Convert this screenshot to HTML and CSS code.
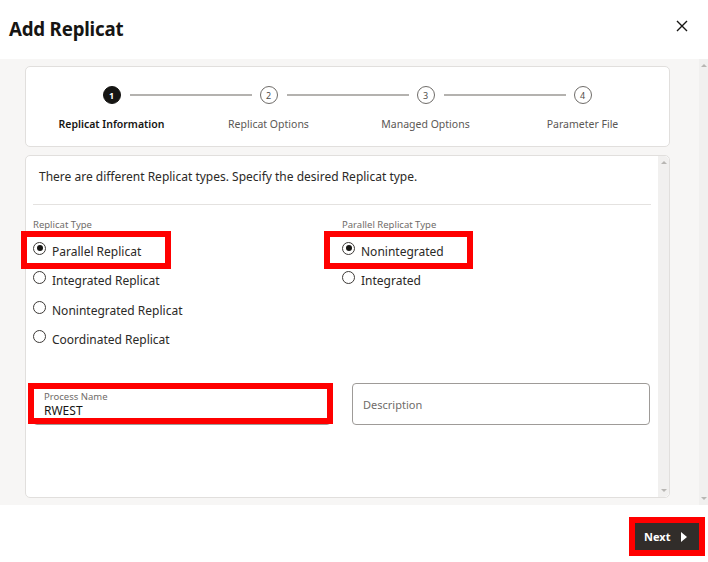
FILE: index.html
```html
<!DOCTYPE html>
<html lang="en">
<head>
<meta charset="utf-8">
<title>Add Replicat</title>
<link rel="stylesheet" href="styles.css">
</head>
<body>
<div class="dialog">
  <header class="dlg-head">
    <h1 class="title">Add Replicat</h1>
    <button class="close" aria-label="Close">
      <svg width="12" height="12" viewBox="0 0 12 12"><path d="M1 1 L11 11 M11 1 L1 11" stroke="#161513" stroke-width="1.4" fill="none"/></svg>
    </button>
  </header>
  <div class="dlg-body">
    <div class="body-main">
      <section class="card stepper">
        <ol class="steps">
          <li class="step active"><span class="dot">1</span><span class="step-label">Replicat Information</span></li>
          <li class="step"><span class="dot">2</span><span class="step-label">Replicat Options</span></li>
          <li class="step"><span class="dot">3</span><span class="step-label">Managed Options</span></li>
          <li class="step last"><span class="dot">4</span><span class="step-label">Parameter File</span></li>
        </ol>
      </section>
      <section class="card content">
        <div class="content-inner">
          <p class="intro">There are different Replicat types. Specify the desired Replicat type.</p>
          <hr class="divider">
          <div class="radio-cols">
            <div class="radio-group">
              <div class="group-label">Replicat Type</div>
              <label class="radio hl hl-left"><span class="mark checked"></span>Parallel Replicat</label>
              <label class="radio"><span class="mark"></span>Integrated Replicat</label>
              <label class="radio"><span class="mark"></span>Nonintegrated Replicat</label>
              <label class="radio"><span class="mark"></span>Coordinated Replicat</label>
            </div>
            <div class="radio-group">
              <div class="group-label">Parallel Replicat Type</div>
              <label class="radio hl hl-right"><span class="mark checked"></span>Nonintegrated</label>
              <label class="radio"><span class="mark"></span>Integrated</label>
            </div>
          </div>
          <div class="fields">
            <div class="field filled hl hl-field">
              <span class="field-label">Process Name</span>
              <span class="field-value">RWEST</span>
            </div>
            <div class="field">
              <span class="placeholder">Description</span>
            </div>
          </div>
        </div>
        <div class="vscroll inner"><span class="arr up"></span><span class="arr down"></span></div>
      </section>
    </div>
    <div class="vscroll outer"><span class="arr up"></span><span class="arr down"></span></div>
  </div>
  <footer class="dlg-foot">
    <button class="next">Next
      <svg width="6" height="10" viewBox="0 0 6 10"><path d="M0 0 L6 5 L0 10 Z" fill="#ffffff"/></svg>
    </button>
  </footer>
</div>
</body>
</html>
```
FILE: styles.css
```css
*, *::before, *::after { box-sizing: border-box; }
html, body { margin: 0; padding: 0; }
body {
  width: 708px;
  height: 562px;
  overflow: hidden;
  font-family: "Noto Sans", "Open Sans", sans-serif;
  color: #161513;
  background: #ffffff;
}
.dialog {
  display: flex;
  flex-direction: column;
  height: 562px;
}
.dlg-head {
  height: 59px;
  flex: none;
  display: flex;
  align-items: center;
  justify-content: space-between;
  padding: 0 20px 2px 9px;
}
.title {
  margin: 0;
  font-size: 18.7px;
  font-weight: 700;
  letter-spacing: -0.2px;
}
.close {
  border: 0;
  background: none;
  padding: 0;
  width: 12px;
  height: 12px;
  display: flex;
  margin-bottom: 5px;
}
.dlg-body {
  flex: 1;
  display: flex;
  background: #f7f6f5;
  min-height: 0;
}
.body-main {
  flex: 1;
  padding: 7px 29px 7px 25px;
  display: flex;
  flex-direction: column;
  gap: 8px;
}
.card {
  background: #ffffff;
  border: 1px solid #e1dfdd;
  border-radius: 5px;
}
.stepper {
  flex: none;
  height: 81px;
  padding: 19px 8px 0 7px;
}
.steps {
  list-style: none;
  margin: 0;
  padding: 0;
  display: grid;
  grid-template-columns: repeat(4, 1fr);
}
.step {
  position: relative;
  display: flex;
  flex-direction: column;
  align-items: center;
}
.step:not(.last)::after {
  content: "";
  position: absolute;
  top: 8px;
  left: calc(50% + 18px);
  right: calc(-50% + 17px);
  height: 2px;
  background: #b4b2af;
}
.dot {
  width: 18px;
  height: 18px;
  border-radius: 50%;
  border: 1px solid #6f6c69;
  display: flex;
  align-items: center;
  justify-content: center;
  font-size: 9px;
  color: #4f4c49;
  line-height: 1;
}
.step.active .dot {
  background: #161513;
  border-color: #161513;
  color: #ffffff;
  font-weight: 700;
}
.step-label {
  margin-top: 13px;
  font-size: 10.5px;
  line-height: 15px;
  color: #5b5855;
  white-space: nowrap;
}
.step.active .step-label {
  color: #161513;
  font-weight: 600;
}
.content {
  flex: 1;
  display: flex;
  min-height: 0;
}
.content-inner {
  flex: 1;
  padding: 12px 7px 0 7px;
}
.intro {
  margin: 0 0 0 6px;
  font-size: 12px;
  line-height: 18px;
  color: #2b2926;
}
.divider {
  margin: 18px 0 0 0;
  border: 0;
  height: 1px;
  background: #e4e2e0;
}
.radio-cols {
  display: grid;
  grid-template-columns: 309px 1fr;
  margin-top: 13px;
}
.group-label {
  font-size: 9.5px;
  line-height: 14px;
  color: #6f6c69;
  margin-bottom: 3px;
}
.radio {
  position: relative;
  display: flex;
  align-items: center;
  height: 29.5px;
  padding-top: 3px;
  font-size: 12px;
  color: #2b2926;
}
.mark {
  width: 13px;
  height: 13px;
  border-radius: 50%;
  border: 1.2px solid #3d3a37;
  margin-right: 6px;
  margin-top: -6px;
  display: flex;
  align-items: center;
  justify-content: center;
  flex: none;
}
.mark.checked::before {
  content: "";
  width: 6px;
  height: 6px;
  border-radius: 50%;
  background: #161513;
}
.hl::after {
  content: "";
  position: absolute;
  border: 6px solid #ff0000;
  pointer-events: none;
}
.hl-left::after {
  top: -4px;
  bottom: -4.5px;
  left: -12px;
  width: 150px;
}
.hl-right::after {
  top: -4px;
  bottom: -4.5px;
  left: -18px;
  width: 149px;
}
.fields {
  display: grid;
  grid-template-columns: 298px 298px;
  column-gap: 21px;
  margin-top: 30px;
}
.field {
  position: relative;
  height: 42px;
  border: 1px solid #9e9b98;
  border-radius: 4px;
  padding: 0 10px;
  display: flex;
  flex-direction: column;
  justify-content: center;
}
.field-label {
  font-size: 9.5px;
  line-height: 12px;
  color: #6f6c69;
  margin-top: 1px;
}
.field-value {
  font-size: 12px;
  line-height: 16px;
  color: #161513;
}
.placeholder {
  font-size: 11px;
  color: #6f6c69;
}
.hl-field::after {
  top: -1px;
  left: -6px;
  right: -3px;
  bottom: 0px;
}
.vscroll {
  position: relative;
  flex: none;
  background: #f1f0ef;
}
.vscroll.inner {
  width: 11px;
  border-radius: 0 5px 5px 0;
}
.vscroll.outer {
  width: 9px;
}
.arr {
  position: absolute;
  left: 50%;
  margin-left: -3px;
  width: 0;
  height: 0;
  border-left: 3px solid transparent;
  border-right: 3px solid transparent;
}
.arr.up {
  top: 5px;
  border-bottom: 3px solid #b8b6b3;
}
.arr.down {
  bottom: 5px;
  border-top: 3px solid #b8b6b3;
}
.dlg-foot {
  height: 57px;
  flex: none;
  display: flex;
  justify-content: flex-end;
  align-items: flex-start;
  padding: 18px 9px 0 0;
}
.next {
  width: 64px;
  height: 27px;
  border: 0;
  background: #312d2a;
  color: #ffffff;
  font-family: inherit;
  font-size: 11px;
  font-weight: 700;
  display: flex;
  align-items: center;
  justify-content: space-between;
  padding: 0 12px 0 9px;
  outline: 6px solid #ff0000;
}
```
